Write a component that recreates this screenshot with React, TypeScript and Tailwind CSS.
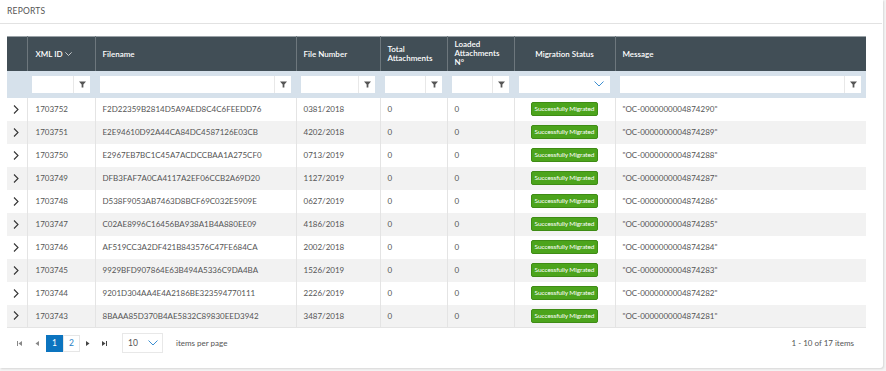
import React from "react";

const rows = [
  ["1703752", "F2D22359B2814D5A9AED8C4C6FEEDD76", "0381/2018", "\"OC-0000000004874290\""],
  ["1703751", "E2E94610D92A44CA84DC4587126E03CB", "4202/2018", "\"OC-0000000004874289\""],
  ["1703750", "E2967EB7BC1C45A7ACDCCBAA1A275CF0", "0713/2019", "\"OC-0000000004874288\""],
  ["1703749", "DFB3FAF7A0CA4117A2EF06CCB2A69D20", "1127/2019", "\"OC-0000000004874287\""],
  ["1703748", "D538F9053AB7463D8BCF69C032E5909E", "0627/2019", "\"OC-0000000004874286\""],
  ["1703747", "C02AE8996C16456BA938A1B4A880EE09", "4186/2018", "\"OC-0000000004874285\""],
  ["1703746", "AF519CC3A2DF421B843576C47FE684CA", "2002/2018", "\"OC-0000000004874284\""],
  ["1703745", "9929BFD907864E63B494A5336C9DA4BA", "1526/2019", "\"OC-0000000004874283\""],
  ["1703744", "9201D304AA4E4A2186BE323594770111", "2226/2019", "\"OC-0000000004874282\""],
  ["1703743", "8BAAA85D370B4AE5832C89830EED3942", "3487/2018", "\"OC-0000000004874281\""],
];

const widths = [20, 68, 201, 84, 67, 67, 101, 251];

function FilterIcon() {
  return (
    <svg width="7" height="7" viewBox="0 0 8 8">
      <path d="M0 0.5 H8 L5 4 V7.5 H3 V4 Z" fill="#555" />
    </svg>
  );
}

function FilterInput() {
  return (
    <div className="flex h-[17px] bg-white mx-[5px]">
      <div className="flex-1" />
      <div className="w-[17px] border-l border-[#e8e8e8] flex items-center justify-center">
        <FilterIcon />
      </div>
    </div>
  );
}

function ChevronDown({ w = 9, color = "#3d8fd1" }: { w?: number; color?: string }) {
  return (
    <svg width={w} height={w * 0.6} viewBox="0 0 10 6">
      <path d="M0.5 0.5 L5 5 L9.5 0.5" fill="none" stroke={color} strokeWidth="1" />
    </svg>
  );
}

export default function App() {
  return (
    <div className="w-[886px] h-[371px] bg-[#f4f4f4] overflow-hidden" style={{ fontFamily: "Lato, 'Open Sans', sans-serif" }}>
      <div className="w-[883px] h-[368px] bg-white rounded-br-[3px] shadow-[1px_1px_2px_rgba(0,0,0,0.12)]">
        <div className="h-[24px] border-b border-[#e2e2e2] flex items-center pl-[7px] mr-[1px]">
          <span className="text-[8.5px] text-[#555] tracking-[0.2px]">REPORTS</span>
        </div>
        <div className="pt-[12px] pl-[7px]">
          <table className="table-fixed border-collapse w-[859px]">
            <colgroup>
              {widths.map((w, i) => (
                <col key={i} style={{ width: w }} />
              ))}
            </colgroup>
            <thead>
              <tr className="h-[34px] bg-[#414e56] text-white text-[8px] font-semibold border-t border-[#9aa2a7]">
                <th className="border-r border-[#6d777d]" />
                <th className="text-left px-[8px] border-r border-[#6d777d] font-semibold">
                  <span className="inline-flex items-center gap-[2px]">XML ID<ChevronDown w={7} color="#fff" /></span>
                </th>
                <th className="text-left px-[7px] border-r border-[#6d777d] font-semibold">Filename</th>
                <th className="text-left px-[7px] border-r border-[#6d777d] font-semibold">File Number</th>
                <th className="text-left px-[7px] border-r border-[#6d777d] font-semibold leading-[9px]">Total<br />Attachments</th>
                <th className="text-left px-[7px] border-r border-[#6d777d] font-semibold leading-[9px]">Loaded<br />Attachments<br />N°</th>
                <th className="text-center px-[4px] border-r border-[#6d777d] font-semibold">Migration Status</th>
                <th className="text-left px-[7px] font-semibold">Message</th>
              </tr>
            </thead>
            <tbody>
              <tr className="h-[27px] bg-[#d6e1eb]">
                <td />
                <td><FilterInput /></td>
                <td><FilterInput /></td>
                <td><FilterInput /></td>
                <td><FilterInput /></td>
                <td><FilterInput /></td>
                <td>
                  <div className="flex items-center justify-end h-[17px] bg-white mx-[5px] pr-[6px]">
                    <ChevronDown w={10} />
                  </div>
                </td>
                <td><FilterInput /></td>
              </tr>
              {rows.map((r, i) => (
                <tr key={i} className={`h-[23px] text-[8px] text-[#555] ${i % 2 === 1 ? "bg-[#f2f2f2]" : "bg-white"} ${i === rows.length - 1 ? "border-b border-[#e4e4e4]" : ""}`}>
                  <td className="border-r border-[#e4e4e4] pl-[6px]">
                    <svg width="6" height="9" viewBox="0 0 6 9">
                      <path d="M1 0.5 L5 4.5 L1 8.5" fill="none" stroke="#333" strokeWidth="1.1" />
                    </svg>
                  </td>
                  <td className="px-[8px] border-r border-[#e4e4e4]">{r[0]}</td>
                  <td className="px-[7px] border-r border-[#e4e4e4] whitespace-nowrap">{r[1]}</td>
                  <td className="px-[7px] border-r border-[#e4e4e4]">{r[2]}</td>
                  <td className="px-[7px] border-r border-[#e4e4e4]">0</td>
                  <td className="px-[7px] border-r border-[#e4e4e4]">0</td>
                  <td className="border-r border-[#e4e4e4] text-center">
                    <span className="inline-block bg-[#4ca41c] border border-[#3f8c15] rounded-[2px] text-white text-[6.5px] leading-[12px] px-[3px] tracking-[-0.1px]">Successfully Migrated</span>
                  </td>
                  <td className="px-[7px]">{r[3]}</td>
                </tr>
              ))}
            </tbody>
          </table>
          <div className="w-[859px] h-[30px] flex items-center text-[8px] text-[#555]">
            <div className="flex items-center pl-[3px]">
              <div className="w-[18px] flex justify-center">
                <svg width="5" height="5" viewBox="0 0 5 5"><path d="M0.5 0 V5" stroke="#888" /><path d="M5 0 L1.5 2.5 L5 5 Z" fill="#888" /></svg>
              </div>
              <div className="w-[18px] flex justify-center">
                <svg width="4" height="5" viewBox="0 0 4 5"><path d="M4 0 L0.5 2.5 L4 5 Z" fill="#888" /></svg>
              </div>
              <div className="w-[17px] h-[17px] bg-[#0c74bf] text-white flex items-center justify-center text-[8.5px]">1</div>
              <div className="w-[17px] h-[17px] bg-white border border-[#e6e6e6] text-[#2b7fc4] flex items-center justify-center text-[8.5px]">2</div>
              <div className="w-[16px] flex justify-center">
                <svg width="4" height="5" viewBox="0 0 4 5"><path d="M0 0 L3.5 2.5 L0 5 Z" fill="#444" /></svg>
              </div>
              <div className="w-[16px] flex justify-center">
                <svg width="5" height="5" viewBox="0 0 5 5"><path d="M0 0 L3.5 2.5 L0 5 Z" fill="#444" /><path d="M4.5 0 V5" stroke="#444" /></svg>
              </div>
              <div className="ml-[10px] w-[41px] h-[20px] border border-[#e8e8e8] flex items-center justify-between pl-[5px] pr-[4px] text-[8.5px]">
                <span>10</span>
                <ChevronDown w={10} />
              </div>
              <span className="ml-[13px]">items per page</span>
            </div>
            <span className="ml-auto mr-[12px]">1 - 10 of 17 items</span>
          </div>
        </div>
      </div>
    </div>
  );
}
